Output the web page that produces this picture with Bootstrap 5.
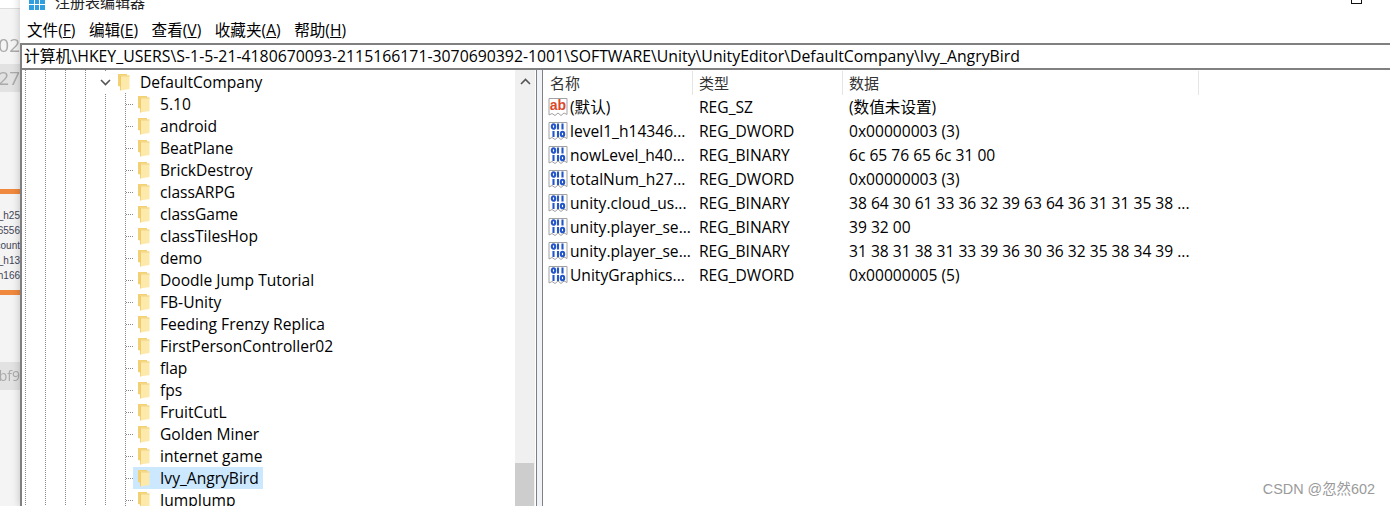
<!DOCTYPE html>
<html lang="zh-CN">
<head>
    <meta charset="UTF-8">
    <title>注册表编辑器</title>
    <link href="https://cdn.jsdelivr.net/npm/bootstrap@5.3.0/dist/css/bootstrap.min.css" rel="stylesheet">
    <style>
        html, body { height: 506px; overflow: hidden; background: #fff; }
        body { font-family: "Open Sans", "Noto Sans CJK SC", sans-serif; font-size: 15px; color: #000; line-height: 1.2; position: relative; }
        .desk-wrap { height: 506px; }

        /* blurred window behind, only a sliver shows */
        .back-strip { width: 20px; flex: none; background: #f4f4f4; overflow: hidden; color: #999; }
        .back-strip > div { display: flex; justify-content: flex-end; white-space: nowrap; overflow: hidden; flex: none; }
        .bs-top { height: 9px; background: #fff; border-bottom: 1px solid #ddd; }
        .bs-a { height: 22px; }
        .bs-num { height: 28px; font-size: 19px; align-items: center; filter: blur(.5px); color: #aaa; }
        .bs-num-hi { background: #e2e2e2; }
        .bs-num-sm { font-size: 14px; }
        .bs-gap-a { height: 5px; }
        .bs-gap-b { height: 97px; }
        .bs-gap-c { height: 14px; }
        .bs-gap-d { height: 7px; }
        .bs-gap-e { height: 67px; }
        .bs-orange { height: 5px; background: #f0883e; }
        .bs-txt { height: 15px; font-size: 10px; line-height: 15px; color: #445; font-family: "Liberation Sans", sans-serif; }

        .reg-window { width: 1370px; flex: none; height: 521px; margin-top: -15px; background: #fff; box-shadow: 0 0 8px rgba(0,0,0,.22); z-index: 1; }
        .title-row { height: 33px; flex: none; padding-left: 9px; }
        .title-row span { font-size: 15px; margin-left: 10px; color: #222; }
        .max-box { width: 11px; height: 10px; border: 1px solid #111; margin: 9px 28px 0 auto; align-self: flex-start; }
        .menu-row { height: 25px; flex: none; padding-left: 7px; gap: 13.500px; font-size: 15.6px; align-items: center; }
        .menu-row u { text-underline-offset: 1px; }

        .reg-body { border-left: 2px solid #808080; border-top: 2px solid #808080; min-height: 0; }
        .addr-row { height: 25px; flex: none; padding-left: 2px; line-height: 23px; font-size: 15.82px; white-space: nowrap; border-bottom: 2px solid #808080; }
        .panes { min-height: 0; }

        .tree-pane { width: 493px; flex: none; overflow: hidden;
            background-image:
                linear-gradient(#888 50%, transparent 50%), linear-gradient(#888 50%, transparent 50%),
                linear-gradient(#888 50%, transparent 50%), linear-gradient(#888 50%, transparent 50%),
                linear-gradient(#888 50%, transparent 50%);
            background-size: 1px 2px;
            background-repeat: repeat-y;
            background-position: 3px 0, 23px 0, 43px 0, 63px 0, 83px 0; }
        .tree-row { height: 22px; display: flex; align-items: center; white-space: nowrap; font-size: 15.6px; }
        .tree-head { padding-left: 96px; margin-top: 1px; }
        .tree-head .chev { width: 13px; height: 22px; background: #fff; margin-left: -19px; margin-right: 5px; }
        .tree-item { padding-left: 104px;
            background-image: linear-gradient(#888 50%, transparent 50%);
            background-size: 1px 2px;
            background-repeat: repeat-y;
            background-position: 103px 0; }
        .tree-stub { width: 8px; height: 1px; flex: none; margin-right: 3px; background-image: linear-gradient(90deg, #888 50%, transparent 50%); background-size: 2px 1px; }
        .fold-ico { width: 14px; height: 18px; flex: none; }
        .tree-label { margin-left: 1px; padding-left: 8px; line-height: 21px; }
        .tree-sel { background: #cce8ff; margin-left: -4px; padding: 0 4px; display: flex; align-items: center; height: 22px; }

        .scroll-bar { width: 20px; flex: none; background: #f0f0f0; padding-top: 8px; }
        .scroll-bar svg { display: block; margin: 0 auto; }
        .scroll-thumb { width: 19px; height: 43px; background: #cdcdcd; }
        .split-bar { width: 7px; flex: none; margin-left: 1px; background: #f0f3f8; border-left: 1px solid #808080; border-right: 1px solid #808080; }

        .list-pane { min-width: 0; }
        .list-head { height: 25px; flex: none; font-size: 15px; color: #333; }
        .list-head > div { padding-left: 6px; border-right: 1px solid #e5e5e5; height: 24px; margin-top: 1px; line-height: 25px; }
        .list-head .cell-name { padding-left: 7px; }
        .cell-name { width: 150px; flex: none; }
        .cell-type { width: 150px; flex: none; }
        .cell-data { width: 356px; flex: none; }
        .list-row { height: 24px; align-items: center; white-space: nowrap; font-size: 15.6px; }
        .list-row .cell-name { display: flex; align-items: center; padding-left: 5px; gap: 2px; overflow: hidden; }
        .list-row .cell-type, .list-row .cell-data { padding-left: 6px; }

        .csdn-mark { position: absolute; right: 15px; bottom: 8px; z-index: 2; font-family: "Liberation Sans", "Noto Sans CJK SC", sans-serif; font-size: 14.4px; color: #9a9a9a; }
    </style>
</head>
<body>
    <svg width="0" height="0" class="position-absolute">
        <symbol id="fold" viewBox="0 0 14 18">
            <path d="M1 1h9v14l-9-2z" fill="#f3d072"/>
            <path d="M3.500 2.500h9v13.500l-9 1.500z" fill="#fdeaab"/>
            <path d="M3.500 2.500h9v1h-9z" fill="#f2d27c"/>
            <path d="M3.500 3v14.500" fill="none" stroke="#ecc566" stroke-width=".8"/>
        </symbol>
        <symbol id="regbin" viewBox="0 0 20 20">
            <path d="M1 1.500h18v16l-3-1.500-3 2.500-3-2.500-3 2.500-3-2-3 1.500z" fill="#fff" stroke="#a2a2a2"/>
            <g fill="none" stroke="#2456c8" stroke-width="2.100">
                <ellipse cx="5.500" cy="5.500" rx="1.700" ry="2.300"/>
                <path d="M10 2.500v6M14.500 2.500v6"/>
                <path d="M5.500 10v6M10 10v6"/>
                <ellipse cx="14.500" cy="13" rx="1.700" ry="2.300"/>
            </g>
        </symbol>
    </svg>

    <div class="desk-wrap d-flex">
        <div class="back-strip d-flex flex-column">
            <div class="bs-top"></div>
            <div class="bs-a"></div>
            <div class="bs-num">02</div>
            <div class="bs-gap-a"></div>
            <div class="bs-num bs-num-hi">27</div>
            <div class="bs-gap-b"></div>
            <div class="bs-orange"></div>
            <div class="bs-gap-c"></div>
            <div class="bs-txt">e_h25</div>
            <div class="bs-txt">66556</div>
            <div class="bs-txt">count</div>
            <div class="bs-txt">l_h13</div>
            <div class="bs-txt">l_h166</div>
            <div class="bs-gap-d"></div>
            <div class="bs-orange"></div>
            <div class="bs-gap-e"></div>
            <div class="bs-num bs-num-hi bs-num-sm">bf9</div>
        </div>

        <div class="reg-window d-flex flex-column">
            <div class="title-row d-flex align-items-center">
                <svg width="16" height="16" viewBox="0 0 16 16">
                    <rect width="16" height="16" fill="#2f9fe0"/>
                    <path d="M0 5.500h16M0 10.500h16M5.500 0v16M10.500 0v16" stroke="#fff" stroke-width="1"/>
                </svg>
                <span>注册表编辑器</span>
                <div class="max-box"></div>
            </div>
            <div class="menu-row d-flex">
                <div>文件(<u>F</u>)</div>
                <div>编辑(<u>E</u>)</div>
                <div>查看(<u>V</u>)</div>
                <div>收藏夹(<u>A</u>)</div>
                <div>帮助(<u>H</u>)</div>
            </div>
            <div class="reg-body d-flex flex-column flex-grow-1">
                <div class="addr-row">计算机\HKEY_USERS\S-1-5-21-4180670093-2115166171-3070690392-1001\SOFTWARE\Unity\UnityEditor\DefaultCompany\Ivy_AngryBird</div>
                <div class="panes d-flex flex-grow-1">
                    <div class="tree-pane">
                        <div class="tree-row tree-head">
                            <div class="chev d-flex align-items-center justify-content-center">
                                <svg width="11" height="7" viewBox="0 0 11 7"><path d="M1 1l4.500 4.500L10 1" fill="none" stroke="#555" stroke-width="1.600"/></svg>
                            </div>
                            <svg class="fold-ico"><use href="#fold"/></svg>
                            <span class="tree-label">DefaultCompany</span>
                        </div>
                        <div class="tree-row tree-item"><div class="tree-stub"></div><svg class="fold-ico"><use href="#fold"/></svg><span class="tree-label">5.10</span></div>
                        <div class="tree-row tree-item"><div class="tree-stub"></div><svg class="fold-ico"><use href="#fold"/></svg><span class="tree-label">android</span></div>
                        <div class="tree-row tree-item"><div class="tree-stub"></div><svg class="fold-ico"><use href="#fold"/></svg><span class="tree-label">BeatPlane</span></div>
                        <div class="tree-row tree-item"><div class="tree-stub"></div><svg class="fold-ico"><use href="#fold"/></svg><span class="tree-label">BrickDestroy</span></div>
                        <div class="tree-row tree-item"><div class="tree-stub"></div><svg class="fold-ico"><use href="#fold"/></svg><span class="tree-label">classARPG</span></div>
                        <div class="tree-row tree-item"><div class="tree-stub"></div><svg class="fold-ico"><use href="#fold"/></svg><span class="tree-label">classGame</span></div>
                        <div class="tree-row tree-item"><div class="tree-stub"></div><svg class="fold-ico"><use href="#fold"/></svg><span class="tree-label">classTilesHop</span></div>
                        <div class="tree-row tree-item"><div class="tree-stub"></div><svg class="fold-ico"><use href="#fold"/></svg><span class="tree-label">demo</span></div>
                        <div class="tree-row tree-item"><div class="tree-stub"></div><svg class="fold-ico"><use href="#fold"/></svg><span class="tree-label">Doodle Jump Tutorial</span></div>
                        <div class="tree-row tree-item"><div class="tree-stub"></div><svg class="fold-ico"><use href="#fold"/></svg><span class="tree-label">FB-Unity</span></div>
                        <div class="tree-row tree-item"><div class="tree-stub"></div><svg class="fold-ico"><use href="#fold"/></svg><span class="tree-label">Feeding Frenzy Replica</span></div>
                        <div class="tree-row tree-item"><div class="tree-stub"></div><svg class="fold-ico"><use href="#fold"/></svg><span class="tree-label">FirstPersonController02</span></div>
                        <div class="tree-row tree-item"><div class="tree-stub"></div><svg class="fold-ico"><use href="#fold"/></svg><span class="tree-label">flap</span></div>
                        <div class="tree-row tree-item"><div class="tree-stub"></div><svg class="fold-ico"><use href="#fold"/></svg><span class="tree-label">fps</span></div>
                        <div class="tree-row tree-item"><div class="tree-stub"></div><svg class="fold-ico"><use href="#fold"/></svg><span class="tree-label">FruitCutL</span></div>
                        <div class="tree-row tree-item"><div class="tree-stub"></div><svg class="fold-ico"><use href="#fold"/></svg><span class="tree-label">Golden Miner</span></div>
                        <div class="tree-row tree-item"><div class="tree-stub"></div><svg class="fold-ico"><use href="#fold"/></svg><span class="tree-label">internet game</span></div>
                        <div class="tree-row tree-item"><div class="tree-stub"></div><div class="tree-sel"><svg class="fold-ico"><use href="#fold"/></svg><span class="tree-label">Ivy_AngryBird</span></div></div>
                        <div class="tree-row tree-item"><div class="tree-stub"></div><svg class="fold-ico"><use href="#fold"/></svg><span class="tree-label">JumpJump</span></div>
                    </div>
                    <div class="scroll-bar d-flex flex-column">
                        <svg width="11" height="7" viewBox="0 0 11 7"><path d="M1 6l4.500-4.500L10 6" fill="none" stroke="#555" stroke-width="1.600"/></svg>
                        <div class="scroll-thumb mt-auto"></div>
                    </div>
                    <div class="split-bar"></div>
                    <div class="list-pane flex-grow-1">
                        <div class="list-head d-flex">
                            <div class="cell-name">名称</div>
                            <div class="cell-type">类型</div>
                            <div class="cell-data">数据</div>
                        </div>
                        <div class="list-row d-flex">
                            <div class="cell-name">
                                <svg width="20" height="20" viewBox="0 0 20 20">
                                    <path d="M1 1.500h18v16l-3-1.500-3 2.500-3-2.500-3 2.500-3-2-3 1.500z" fill="#fff" stroke="#a2a2a2"/>
                                    <text x="10" y="12.500" text-anchor="middle" font-family="Liberation Sans" font-weight="700" font-size="14" fill="#d9482b">ab</text>
                                </svg>
                                <span>(默认)</span>
                            </div>
                            <div class="cell-type">REG_SZ</div>
                            <div class="cell-data">(数值未设置)</div>
                        </div>
                        <div class="list-row d-flex">
                            <div class="cell-name"><svg width="20" height="20"><use href="#regbin"/></svg><span>level1_h14346...</span></div>
                            <div class="cell-type">REG_DWORD</div>
                            <div class="cell-data">0x00000003 (3)</div>
                        </div>
                        <div class="list-row d-flex">
                            <div class="cell-name"><svg width="20" height="20"><use href="#regbin"/></svg><span>nowLevel_h40...</span></div>
                            <div class="cell-type">REG_BINARY</div>
                            <div class="cell-data">6c 65 76 65 6c 31 00</div>
                        </div>
                        <div class="list-row d-flex">
                            <div class="cell-name"><svg width="20" height="20"><use href="#regbin"/></svg><span>totalNum_h27...</span></div>
                            <div class="cell-type">REG_DWORD</div>
                            <div class="cell-data">0x00000003 (3)</div>
                        </div>
                        <div class="list-row d-flex">
                            <div class="cell-name"><svg width="20" height="20"><use href="#regbin"/></svg><span>unity.cloud_us...</span></div>
                            <div class="cell-type">REG_BINARY</div>
                            <div class="cell-data">38 64 30 61 33 36 32 39 63 64 36 31 31 35 38 ...</div>
                        </div>
                        <div class="list-row d-flex">
                            <div class="cell-name"><svg width="20" height="20"><use href="#regbin"/></svg><span>unity.player_se...</span></div>
                            <div class="cell-type">REG_BINARY</div>
                            <div class="cell-data">39 32 00</div>
                        </div>
                        <div class="list-row d-flex">
                            <div class="cell-name"><svg width="20" height="20"><use href="#regbin"/></svg><span>unity.player_se...</span></div>
                            <div class="cell-type">REG_BINARY</div>
                            <div class="cell-data">31 38 31 38 31 33 39 36 30 36 32 35 38 34 39 ...</div>
                        </div>
                        <div class="list-row d-flex">
                            <div class="cell-name"><svg width="20" height="20"><use href="#regbin"/></svg><span>UnityGraphics...</span></div>
                            <div class="cell-type">REG_DWORD</div>
                            <div class="cell-data">0x00000005 (5)</div>
                        </div>
                    </div>
                </div>
            </div>
        </div>
    </div>
    <div class="csdn-mark">CSDN @忽然602</div>
    <script src="https://cdn.jsdelivr.net/npm/bootstrap@5.3.0/dist/js/bootstrap.bundle.min.js"></script>
</body>
</html>
